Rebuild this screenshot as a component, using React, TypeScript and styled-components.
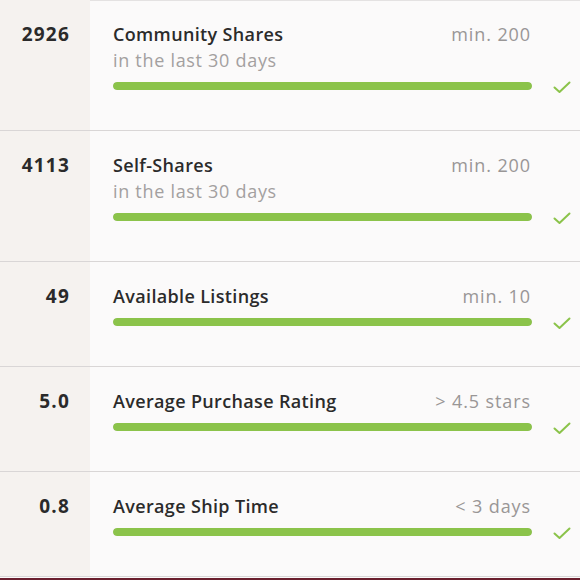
import React from 'react';
import styled, { createGlobalStyle } from 'styled-components';

const GlobalStyle = createGlobalStyle`
    html, body {
        margin: 0;
        padding: 0;
        background: #fbfafa;
    }
    body {
        font-family: "Open Sans", "Liberation Sans", sans-serif;
        -webkit-font-smoothing: antialiased;
    }
`;

interface Requirement {
    value: string;
    title: string;
    subtitle?: string;
    target: string;
    progress: number;
}

const requirements: Requirement[] = [
    { value: '2926', title: 'Community Shares', subtitle: 'in the last 30 days', target: 'min. 200', progress: 1 },
    { value: '4113', title: 'Self-Shares', subtitle: 'in the last 30 days', target: 'min. 200', progress: 1 },
    { value: '49', title: 'Available Listings', target: 'min. 10', progress: 1 },
    { value: '5.0', title: 'Average Purchase Rating', target: '> 4.5 stars', progress: 1 },
    { value: '0.8', title: 'Average Ship Time', target: '< 3 days', progress: 1 },
];

const Page = styled.div`
    width: 580px;
    height: 580px;
    overflow: hidden;
    display: flex;
    flex-direction: column;
    background: #fbfafa;
    box-shadow: inset 0 1px 0 #e4e2e2;
`;

const List = styled.div`
    flex: 1;
    display: flex;
    flex-direction: column;
`;

const Row = styled.div`
    display: flex;
    border-bottom: 1px solid #d9d6d6;
`;

const ValueCell = styled.div`
    width: 90px;
    flex-shrink: 0;
    box-sizing: border-box;
    background: #f5f2ef;
    padding: 21px 20px 0 0;
    text-align: right;
    font-size: 19px;
    line-height: 26px;
    font-weight: 700;
    letter-spacing: 1.2px;
    color: #2a2a2a;
`;

const Body = styled.div`
    flex: 1;
    display: flex;
    align-items: flex-start;
    padding: 21px 0 40px 23px;
`;

const Main = styled.div`
    width: 419px;
    display: flex;
    flex-direction: column;
`;

const TitleLine = styled.div`
    display: flex;
    justify-content: space-between;
    align-items: baseline;
`;

const Title = styled.span`
    font-size: 18px;
    line-height: 26px;
    font-weight: 600;
    letter-spacing: 0.35px;
    color: #2b2b2b;
`;

const Target = styled.span`
    font-size: 18px;
    line-height: 26px;
    font-weight: 500;
    letter-spacing: 0.9px;
    color: #999696;
    margin-right: 1px;
`;

const Subtitle = styled.div`
    font-size: 18px;
    line-height: 26px;
    letter-spacing: 0.7px;
    color: #a3a0a0;
`;

const Track = styled.div`
    margin-top: 9px;
    height: 8px;
    border-radius: 4px;
    background: #e4e2e2;
    overflow: hidden;
`;

const Fill = styled.div`
    height: 100%;
    border-radius: 4px;
    background: #8bc34a;
`;

const Check = styled.svg`
    flex-shrink: 0;
    margin: 0 0 0 21px;
    align-self: flex-end;
    position: relative;
    top: 4px;
`;

const Footer = styled.div`
    height: 3px;
    margin-top: 1px;
    background: #6a1f2e;
`;

const CheckIcon = () => (
    <Check width="18" height="13" viewBox="0 0 18 13">
        <path d="M1.5 6.5 L6.5 11 L16.5 1.5" fill="none" stroke="#8bc34a" strokeWidth="2" strokeLinecap="round" strokeLinejoin="round" />
    </Check>
);

export default function App() {
    return (
        <Page>
            <GlobalStyle />
            <List>
                {requirements.map((r) => (
                    <Row key={r.title}>
                        <ValueCell>{r.value}</ValueCell>
                        <Body>
                            <Main>
                                <TitleLine>
                                    <Title>{r.title}</Title>
                                    <Target>{r.target}</Target>
                                </TitleLine>
                                {r.subtitle && <Subtitle>{r.subtitle}</Subtitle>}
                                <Track>
                                    <Fill style={{ width: `${r.progress * 100}%` }} />
                                </Track>
                            </Main>
                            <CheckIcon />
                        </Body>
                    </Row>
                ))}
            </List>
            <Footer />
        </Page>
    );
}
